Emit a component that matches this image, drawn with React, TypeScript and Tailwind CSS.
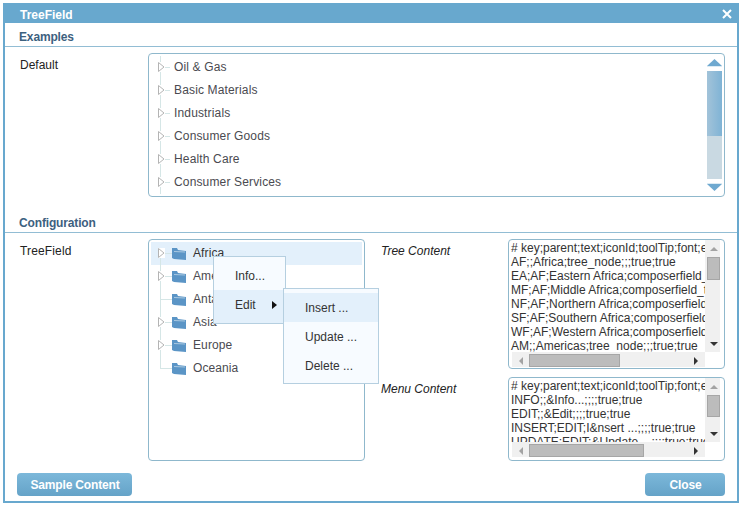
// App.tsx
const SECTORS = ['Oil & Gas', 'Basic Materials', 'Industrials', 'Consumer Goods', 'Health Care', 'Consumer Services']

const CONTINENTS = [
  { label: 'Africa', expandable: true, selected: true },
  { label: 'Americas', expandable: true },
  { label: 'Antarctica', expandable: false },
  { label: 'Asia', expandable: true },
  { label: 'Europe', expandable: true },
  { label: 'Oceania', expandable: false, last: true },
]

const TREE_CONTENT = [
  '# key;parent;text;iconId;toolTip;font;enabled',
  'AF;;Africa;tree_node;;;true;true',
  'EA;AF;Eastern Africa;composerfield_tree',
  'MF;AF;Middle Africa;composerfield_tree',
  'NF;AF;Northern Africa;composerfield_tree',
  'SF;AF;Southern Africa;composerfield_tree',
  'WF;AF;Western Africa;composerfield_tree',
  'AM;;Americas;tree_node;;;true;true',
]

const MENU_CONTENT = [
  '# key;parent;text;iconId;toolTip;font;enabled',
  'INFO;;&Info...;;;;true;true',
  'EDIT;;&Edit;;;;true;true',
  'INSERT;EDIT;I&nsert ...;;;;true;true',
  'UPDATE;EDIT;&Update ...;;;;true;true',
]

function Expander() {
  return (
    <svg width="7" height="10" viewBox="0 0 7 10" className="absolute left-[7px] top-[6px] bg-white">
      <path d="M0.5 0.5 L6 5 L0.5 9.5 Z" fill="#fff" stroke="#b4b4b4" />
    </svg>
  )
}

function Connector({ expandable, last, width, selected }: { expandable: boolean; last?: boolean; width: string; selected?: boolean }) {
  return (
    <div className={`relative h-full shrink-0 ${width}`}>
      <div className={`absolute left-[9px] w-px bg-[#d5e6e6] ${last ? 'h-[11px]' : 'h-full'} ${selected ? 'top-[11px]' : 'top-0'}`} />
      <div className="absolute left-[9px] right-0 top-[11px] h-px bg-[#d5e6e6]" />
      {expandable && <Expander />}
    </div>
  )
}

function Folder() {
  return (
    <svg width="14" height="12" viewBox="0 0 14 12" className="mt-[1px] shrink-0">
      <path d="M0 0 L5 0 L6 2 L14 3 L14 12 L2 11 L0 10 Z" fill="#5b95c6" />
      <path d="M2 3 L13 3.5 L13 4.5 L2 4 Z" fill="#a9c8e0" />
    </svg>
  )
}

function TreeScrollbar() {
  return (
    <div className="mr-[2px] flex w-[15px] shrink-0 flex-col pt-[5px]">
      <svg width="15" height="8" viewBox="0 0 15 8">
        <path d="M7.5 0 L15 7 L0 7 Z" fill="#6fa9d0" />
        <rect y="7" width="15" height="1" fill="#dcebf4" />
      </svg>
      <div className="mt-[4px] h-[65px] bg-gradient-to-r from-[#a2c3d9] to-[#7fb3d5]" />
      <div className="h-[43px] bg-[#c9d9e2]" />
      <svg width="15" height="8" viewBox="0 0 15 8" className="mt-[4px]">
        <rect width="15" height="1" fill="#dcebf4" />
        <path d="M0 1 L15 1 L7.5 8 Z" fill="#6fa9d0" />
      </svg>
    </div>
  )
}

function Arrow({ dir }: { dir: 'up' | 'down' | 'left' | 'right' }) {
  const dark = dir === 'down' || dir === 'right'
  const d = {
    up: 'M4 1 L8 5 L0 5 Z',
    down: 'M0 1 L8 1 L4 5 Z',
    left: 'M5 0 L5 8 L1 4 Z',
    right: 'M1 0 L1 8 L5 4 Z',
  }[dir]
  const horizontal = dir === 'left' || dir === 'right'
  return (
    <svg width={horizontal ? 6 : 8} height={horizontal ? 8 : 6} viewBox={horizontal ? '0 0 6 8' : '0 0 8 6'}>
      <path d={d} fill={dark ? '#333333' : '#a3a3a3'} />
    </svg>
  )
}

function TextArea({ lines, height, bodyHeight, vThumb, hThumb }: { lines: string[]; height: string; bodyHeight: string; vThumb: string; hThumb: string }) {
  return (
    <div className={`flex w-[217px] flex-col overflow-hidden rounded-[4px] border border-[#8fb8cc] bg-white ${height}`}>
      <div className={`flex shrink-0 ${bodyHeight}`}>
        <div className="w-[196px] shrink-0 overflow-hidden whitespace-pre pl-[2px] pt-[1px] text-[12px] leading-[14px] text-[#333]">
          {lines.map((line) => (
            <div key={line}>{line}</div>
          ))}
        </div>
        <div className="flex w-[15px] shrink-0 flex-col items-end bg-[#f0f0f0]">
          <div className="flex h-[17px] w-[13px] items-center justify-center">
            <Arrow dir="up" />
          </div>
          <div className={`w-[13px] border border-[#a6a6a6] bg-[#bcbcbc] ${vThumb}`} />
          <div className="flex-1" />
          <div className="flex h-[17px] w-[13px] items-center justify-center">
            <Arrow dir="down" />
          </div>
        </div>
      </div>
      <div className="ml-[3px] flex h-[15px] w-[193px] shrink-0 items-end bg-[#f0f0f0]">
        <div className="flex h-[13px] w-[17px] shrink-0 items-center justify-center">
          <Arrow dir="left" />
        </div>
        <div className={`h-[13px] border border-[#a6a6a6] bg-[#bcbcbc] ${hThumb}`} />
        <div className="flex h-[13px] flex-1 items-center justify-end pr-[6px]">
          <Arrow dir="right" />
        </div>
      </div>
    </div>
  )
}

function SectionHeader({ title }: { title: string }) {
  return (
    <div className="flex h-[24px] shrink-0 items-center border-b border-[#92bdd4] pl-[14px] pt-[4px] text-[12px] font-bold tracking-[-0.15px] text-[#3d617f]">
      {title}
    </div>
  )
}

function Button({ label, width }: { label: string; width: string }) {
  return (
    <button className={`h-[23px] rounded-[4px] bg-gradient-to-b from-[#7cb8da] to-[#65a3c8] pl-[1px] text-[12px] font-bold tracking-[-0.15px] text-white ${width}`}>
      {label}
    </button>
  )
}

export default function App() {
  return (
    <div className="h-[506px] w-[741px] bg-white p-[3px] text-[12px] [font-family:'Liberation_Sans',Arial,sans-serif]">
      <div className="flex h-[500px] w-[736px] flex-col border-2 border-[#68a8ce] bg-white">
        {/* Barre de titre */}
        <div className="flex h-[18px] shrink-0 items-center justify-between bg-[#68a8ce] pl-[15px] pr-[5px] text-[12px] font-bold text-white">
          <span className="pt-[2px]">TreeField</span>
          <svg width="10" height="10" viewBox="0 0 10 10" className="mb-[1px]">
            <path d="M1 1 L9 9 M9 1 L1 9" stroke="#fff" strokeWidth="2" />
          </svg>
        </div>

        <SectionHeader title="Examples" />
        <div className="flex pl-[15px] pt-[6px]">
          <div className="w-[128px] shrink-0 pt-[3px] text-[#222]">Default</div>
          <div className="flex h-[144px] w-[577px] overflow-hidden rounded-[4px] border border-[#8fb8cc]">
            <div className="flex-1 pl-[2px] pt-[2px]">
              {SECTORS.map((label) => (
                <div key={label} className="flex h-[23px] items-center tracking-[0.15px] text-[#4a4a50]">
                  <Connector expandable width="w-[19px]" />
                  <span className="pb-[2px] pl-[4px]">{label}</span>
                </div>
              ))}
            </div>
            <TreeScrollbar />
          </div>
        </div>

        <div className="mt-[12px]">
          <SectionHeader title="Configuration" />
        </div>
        <div className="flex pl-[15px] pt-[6px]">
          <div className="w-[128px] shrink-0 pt-[3px] tracking-[0.15px] text-[#222]">TreeField</div>
          <div className="relative h-[222px] w-[217px] shrink-0 rounded-[4px] border border-[#8fb8cc] p-[2px]">
            {CONTINENTS.map((node) => (
              <div key={node.label} className={`flex h-[23px] items-center tracking-[0.1px] ${node.selected ? 'bg-[#e3f0fb] text-[#333]' : 'text-[#4a4a50]'}`}>
                <Connector expandable={node.expandable} last={node.last} width="w-[21px]" selected={node.selected} />
                <Folder />
                <span className="pb-[2px] pl-[7px]">{node.label}</span>
              </div>
            ))}

            {/* Menu contextuel */}
            <div className="absolute left-[64px] top-[16px] h-[68px] w-[73px] border border-[#b5cfe0] bg-[#f7fbff] pt-[4px] text-[#333]">
              <div className="flex h-[29px] items-center pl-[21px]">Info...</div>
              <div className="flex h-[33px] items-center bg-[#e3f0fb] pb-[4px] pl-[21px]">
                <span className="w-[37px]">Edit</span>
                <svg width="5" height="8" viewBox="0 0 5 8">
                  <path d="M0 0 L5 4 L0 8 Z" fill="#111" />
                </svg>
              </div>
            </div>
            <div className="absolute left-[134px] top-[48px] h-[96px] w-[96px] border border-[#b5cfe0] bg-[#f7fbff] pt-[4px] text-[#333]">
              <div className="flex h-[29px] items-center bg-[#e3f0fb] pl-[21px]">Insert ...</div>
              <div className="flex h-[29px] items-center pl-[21px]">Update ...</div>
              <div className="flex h-[29px] items-center pl-[21px]">Delete ...</div>
            </div>
          </div>

          <div className="flex flex-col gap-[8px]">
            <div className="flex">
              <div className="w-[143px] shrink-0 pl-[16px] pt-[3px] italic text-[#222]">Tree Content</div>
              <TextArea lines={TREE_CONTENT} height="h-[130px]" bodyHeight="h-[112px]" vThumb="h-[23px]" hThumb="w-[91px]" />
            </div>
            <div className="flex">
              <div className="w-[143px] shrink-0 pl-[16px] pt-[3px] italic text-[#222]">Menu Content</div>
              <TextArea lines={MENU_CONTENT} height="h-[84px]" bodyHeight="h-[64px]" vThumb="h-[22px]" hThumb="w-[115px]" />
            </div>
          </div>
        </div>

        <div className="flex justify-between pl-[12px] pr-[12px] pt-[12px]">
          <Button label="Sample Content" width="w-[115px]" />
          <Button label="Close" width="w-[80px]" />
        </div>
      </div>
    </div>
  )
}
